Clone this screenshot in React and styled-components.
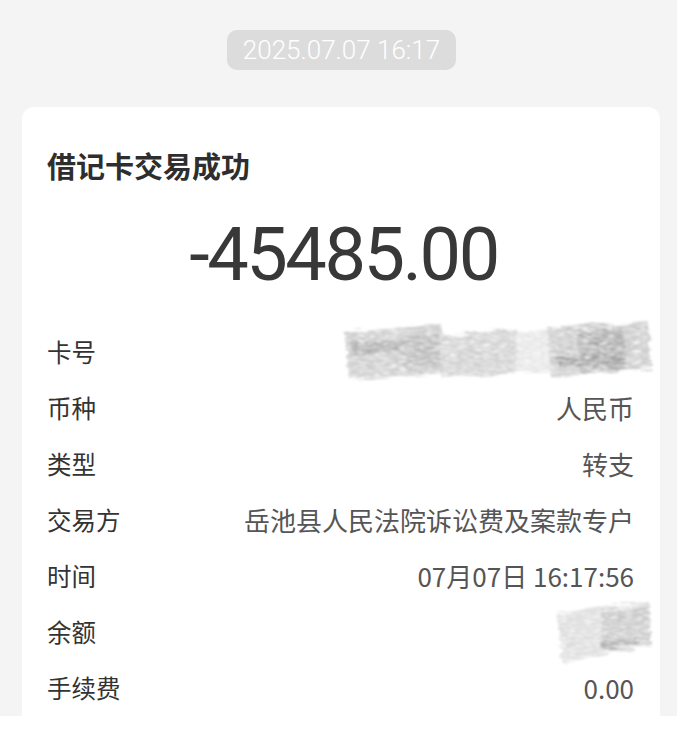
import React from 'react';
import styled, { createGlobalStyle } from 'styled-components';

const GlobalStyle = createGlobalStyle`
  html, body {
    margin: 0;
    padding: 0;
    background: #ffffff;
  }
  body {
    font-family: "Noto Sans CJK SC", "Noto Sans", sans-serif;
  }
`;

const rows = [
  { label: '卡号', mask: 'card' },
  { label: '币种', value: '人民币' },
  { label: '类型', value: '转支' },
  { label: '交易方', value: '岳池县人民法院诉讼费及案款专户' },
  { label: '时间', value: '07月07日 16:17:56' },
  { label: '余额', mask: 'balance' },
  { label: '手续费', value: '0.00' },
];

// pencil scribble used to hide numbers
const Grain = ({ id, seed }) => (
  <filter id={id} x="-5%" y="-10%" width="110%" height="120%">
    <feTurbulence type="fractalNoise" baseFrequency="0.03 0.3" numOctaves="2" seed={seed} result="warp" />
    <feDisplacementMap in="SourceGraphic" in2="warp" scale="10" result="moved" />
    <feTurbulence type="fractalNoise" baseFrequency="0.12 1.1" numOctaves="3" seed={seed} result="noise" />
    <feColorMatrix
      in="noise"
      type="matrix"
      values="0 0 0 0 0  0 0 0 0 0  0 0 0 0 0  2.2 0 0 0 -0.35"
      result="mask"
    />
    <feComposite in="moved" in2="mask" operator="in" result="cut" />
    <feGaussianBlur in="cut" stdDeviation="0.8" />
  </filter>
);

const CardMask = () => (
  <svg width="314" height="72" viewBox="0 0 314 72">
    <defs>
      <Grain id="grainA" seed="4" />
    </defs>
    <g filter="url(#grainA)">
      <polygon points="4,18 100,8 104,58 8,64" fill="#cccccc" />
      <polygon points="10,28 95,22 96,34 12,40" fill="#adadad" />
      <polygon points="60,24 98,20 100,50 62,54" fill="#b8b8b8" />
      <polygon points="98,20 176,14 178,58 100,62" fill="#d0d0d0" />
      <polygon points="176,16 218,12 216,56 176,58" fill="#e6e6e6" />
      <polygon points="206,12 308,6 310,54 210,62" fill="#c9c9c9" />
      <polygon points="236,18 282,14 284,54 238,58" fill="#a8a8a8" />
      <polygon points="216,44 280,38 282,48 218,52" fill="#9c9c9c" />
    </g>
  </svg>
);

const BalanceMask = () => (
  <svg width="104" height="72" viewBox="0 0 104 72">
    <defs>
      <Grain id="grainB" seed="9" />
    </defs>
    <g filter="url(#grainB)">
      <polygon points="6,18 98,6 100,50 12,68" fill="#dcdcdc" />
      <polygon points="50,16 98,10 100,48 50,56" fill="#c6c6c6" />
      <polygon points="50,48 86,42 86,50 52,54" fill="#acacac" />
    </g>
  </svg>
);

export default function App() {
  return (
    <>
      <GlobalStyle />
      <Page>
        <Stamp>2025.07.07 16:17</Stamp>
        <Card>
          <Title>借记卡交易成功</Title>
          <Amount>-45485.00</Amount>
          <List>
            {rows.map(row => (
              <Row key={row.label}>
                <Label>{row.label}</Label>
                {row.mask === 'card' && (
                  <Mask $shift={21}>
                    <CardMask />
                  </Mask>
                )}
                {row.mask === 'balance' && (
                  <Mask $shift={21}>
                    <BalanceMask />
                  </Mask>
                )}
                {row.value && <Value>{row.value}</Value>}
              </Row>
            ))}
          </List>
        </Card>
      </Page>
    </>
  );
}

const Page = styled.div`
  width: 677px;
  height: 716px;
  background: #f4f4f4;
  display: flex;
  flex-direction: column;
  align-items: center;
  padding-top: 30px;
  box-sizing: border-box;
  overflow: hidden;
`;

const Stamp = styled.div`
  height: 40px;
  padding: 0 16px;
  margin-left: 6px;
  border-radius: 10px;
  background: #dcdcdc;
  color: #ffffff;
  font-family: Roboto, "Noto Sans", sans-serif;
  font-size: 26px;
  font-weight: 300;
  line-height: 40px;
`;

const Card = styled.div`
  align-self: stretch;
  margin: 37px 17px 0 22px;
  background: #ffffff;
  border-radius: 12px 12px 0 0;
  padding: 40px 26px 0 25px;
  flex: 1;
`;

const Title = styled.div`
  font-size: 29px;
  font-weight: 700;
  color: #2e2e2e;
  line-height: 36px;
`;

const Amount = styled.div`
  margin-top: 32px;
  text-align: center;
  font-family: Roboto, "Noto Sans", sans-serif;
  font-size: 74px;
  font-weight: 400;
  color: #383838;
  line-height: 80px;
  letter-spacing: -2.5px;
  padding-left: 6px;
`;

const List = styled.div`
  margin-top: 28px;
  display: flex;
  flex-direction: column;
`;

const Row = styled.div`
  height: 56px;
  display: flex;
  align-items: center;
  justify-content: space-between;
`;

const Label = styled.div`
  font-size: 24.5px;
  color: #333333;
`;

const Value = styled.div`
  font-size: 26px;
  color: #555555;
`;

const Mask = styled.div`
  margin-right: -${p => p.$shift}px;
  display: flex;
  align-items: center;
`;
